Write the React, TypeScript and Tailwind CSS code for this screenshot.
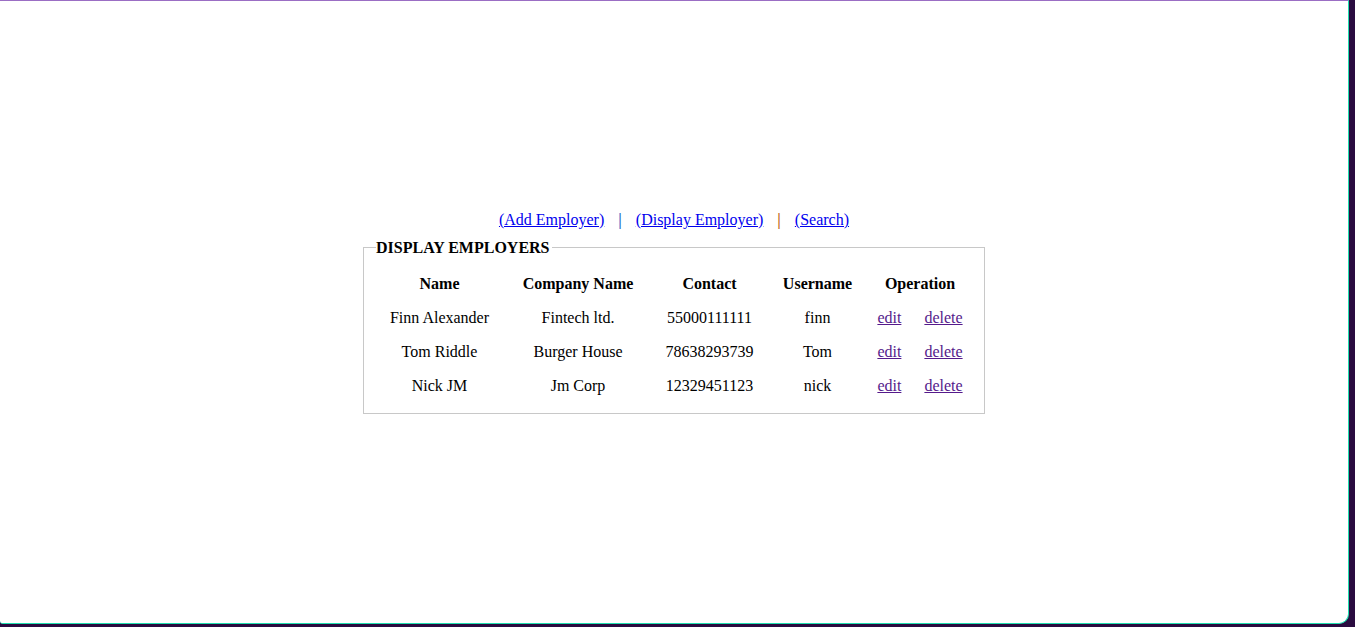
const employers = [
  { name: "Finn Alexander", company: "Fintech ltd.", contact: "55000111111", username: "finn" },
  { name: "Tom Riddle", company: "Burger House", contact: "78638293739", username: "Tom" },
  { name: "Nick JM", company: "Jm Corp", contact: "12329451123", username: "nick" },
];

const App = () => {
  return (
    <div className="w-[1355px] h-[627px] bg-[#2a0c40] overflow-hidden font-['Liberation_Serif',serif] text-[16px] text-black">
      <div className="w-[1349px] h-[624px] bg-white border-t border-t-[#9b6ec4] border-b border-r border-b-[#1fe0b0] border-r-[#1fe0b0] rounded-br-[10px] rounded-bl-[3px] pt-[210px]">
        {/* nav */}
        <div className="text-center leading-[18px]">
          <a href="#" className="text-[#0000ee] underline">(Add Employer)</a>
          <span className="mx-[14px] font-bold text-[#2a6cc8]">|</span>
          <a href="#" className="text-[#0000ee] underline">(Display Employer)</a>
          <span className="mx-[14px] font-bold text-[#c0651a]">|</span>
          <a href="#" className="text-[#0000ee] underline">(Search)</a>
        </div>

        <fieldset className="mx-auto mt-[8px] w-[622px] border border-[#c8c8c8] px-[9px] pb-[10px]">
          <legend className="ml-[3px] pr-[2px] pt-[2px] font-bold leading-[18px]">DISPLAY EMPLOYERS</legend>
          <table className="mt-[10px] border-collapse">
            <thead>
              <tr className="h-[34px] font-bold">
                <th className="w-[133px] text-center">Name</th>
                <th className="w-[144px] text-center">Company Name</th>
                <th className="w-[119px] text-center">Contact</th>
                <th className="w-[97px] text-center">Username</th>
                <th className="w-[108px] text-center">Operation</th>
              </tr>
            </thead>
            <tbody>
              {employers.map((e) => (
                <tr key={e.contact} className="h-[34px]">
                  <td className="text-center">{e.name}</td>
                  <td className="text-center">{e.company}</td>
                  <td className="text-center">{e.contact}</td>
                  <td className="text-center">{e.username}</td>
                  <td className="text-center">
                    <a href="#" className="text-[#551a8b] underline">edit</a>
                    <a href="#" className="ml-[23px] text-[#551a8b] underline">delete</a>
                  </td>
                </tr>
              ))}
            </tbody>
          </table>
        </fieldset>
      </div>
    </div>
  );
};

export default App;
